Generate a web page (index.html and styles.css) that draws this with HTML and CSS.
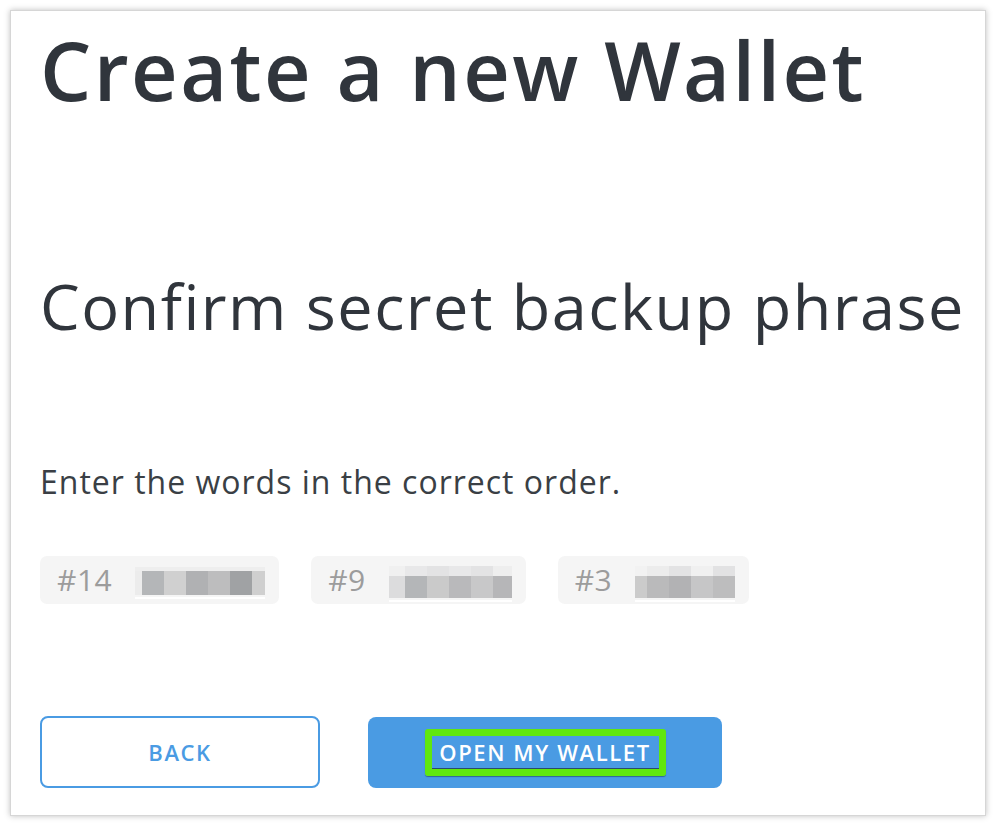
FILE: index.html
```html
<!DOCTYPE html>
<html lang="en">
<head>
<meta charset="utf-8">
<title>Create a new Wallet</title>
<link rel="stylesheet" href="styles.css">
</head>
<body>
<main class="panel">
  <h1 class="title">Create a new Wallet</h1>
  <h2 class="subtitle">Confirm secret backup phrase</h2>
  <p class="hint">Enter the words in the correct order.</p>
  <div class="chips">
    <div class="chip">
      <span class="num">#14</span>
      <span class="blur b1">
        <span class="col w7"><i class="t c-ee"></i><i class="m c-ec"></i></span>
        <span class="col w22"><i class="t c-ee"></i><i class="m c-b4"></i></span>
        <span class="col w22"><i class="t c-ee"></i><i class="m c-d0"></i></span>
        <span class="col w22"><i class="t c-ee"></i><i class="m c-b0"></i></span>
        <span class="col w22"><i class="t c-ee"></i><i class="m c-bd"></i></span>
        <span class="col w22"><i class="t c-ee"></i><i class="m c-a0"></i></span>
        <span class="col w13"><i class="t c-ee"></i><i class="m c-cf"></i></span>
      </span>
    </div>
    <div class="chip">
      <span class="num">#9</span>
      <span class="blur b2">
        <span class="col w16"><i class="t c-f0"></i><i class="m c-dc"></i></span>
        <span class="col w22"><i class="t c-e8"></i><i class="m c-b4"></i></span>
        <span class="col w22"><i class="t c-e3"></i><i class="m c-ca"></i></span>
        <span class="col w22"><i class="t c-e8"></i><i class="m c-b9"></i></span>
        <span class="col w22"><i class="t c-e3"></i><i class="m c-c8"></i></span>
        <span class="col w19"><i class="t c-ee"></i><i class="m c-b6"></i></span>
      </span>
    </div>
    <div class="chip">
      <span class="num">#3</span>
      <span class="blur b3">
        <span class="col w12"><i class="t c-f2"></i><i class="m c-cb"></i></span>
        <span class="col w22"><i class="t c-ec"></i><i class="m c-ba"></i></span>
        <span class="col w22"><i class="t c-e3"></i><i class="m c-b2"></i></span>
        <span class="col w22"><i class="t c-f0"></i><i class="m c-c6"></i></span>
        <span class="col w22"><i class="t c-e2"></i><i class="m c-bd"></i></span>
      </span>
    </div>
  </div>
  <div class="actions">
    <button class="btn btn-outline">BACK</button>
    <button class="btn btn-primary"><span class="focus">OPEN MY WALLET</span></button>
  </div>
</main>
</body>
</html>
```

FILE: styles.css
```css
html, body {
  margin: 0;
  padding: 0;
  background: #ffffff;
}

body {
  font-family: "Open Sans", "Noto Sans", sans-serif;
  color: #30353c;
}

.panel {
  box-sizing: border-box;
  margin: 10px;
  width: 976px;
  height: 806px;
  border: 1px solid #d6d6d6;
  box-shadow: 0 0 6px rgba(0, 0, 0, 0.25);
  background: #ffffff;
  padding: 18px 0 0 29px;
  display: flex;
  flex-direction: column;
  align-items: flex-start;
}

.title {
  margin: 0;
  font-size: 81px;
  line-height: 81px;
  font-weight: 600;
  letter-spacing: 2.4px;
  color: #30353c;
  white-space: nowrap;
}

.subtitle {
  margin: 164px 0 0;
  font-size: 63px;
  line-height: 63px;
  font-weight: 400;
  letter-spacing: 1.5px;
  color: #30353c;
  white-space: nowrap;
}

.hint {
  margin: 129px 0 0;
  font-size: 32px;
  line-height: 32px;
  font-weight: 400;
  letter-spacing: 1px;
  color: #3a3f45;
  white-space: nowrap;
}

.chips {
  margin-top: 58px;
  display: flex;
  gap: 32px;
}

.chip {
  height: 48px;
  box-sizing: border-box;
  background: #f5f5f5;
  border-radius: 7px;
  display: flex;
  align-items: center;
  padding: 0 14px 0 17px;
  gap: 23px;
}

.num {
  font-size: 30px;
  line-height: 30px;
  letter-spacing: 0.5px;
  color: #9c9c9c;
}

.blur {
  display: flex;
  height: 34px;
}

.blur .col {
  display: flex;
  flex-direction: column;
}

.blur .t { display: block; height: 10px; }
.blur .m { display: block; height: 22px; }
.b1 .t { height: 4px; }
.b1 .m { height: 24px; }
.b1 { height: 30px; border-bottom: 2px solid #fff; margin-top: 6px; }
.b2, .b3 { border-bottom: 2px solid #fff; margin-top: 8px; }

.w7 { width: 7px; }
.w12 { width: 12px; }
.w13 { width: 13px; }
.w16 { width: 16px; }
.w19 { width: 19px; }
.w22 { width: 22px; }

.c-a0 { background: #a0a2a4; }
.c-b0 { background: #b0b1b3; }
.c-b2 { background: #b2b2b4; }
.c-b4 { background: #b4b6b8; }
.c-b6 { background: #b6b6b8; }
.c-b9 { background: #b9b9bb; }
.c-ba { background: #bababb; }
.c-bd { background: #bdbdbe; }
.c-c6 { background: #c6c6c7; }
.c-c8 { background: #c8c8c9; }
.c-ca { background: #cacaca; }
.c-cb { background: #cbcbcb; }
.c-cf { background: #cfcfcf; }
.c-d0 { background: #d0d0d0; }
.c-dc { background: #dcdcdd; }
.c-e2 { background: #e2e2e3; }
.c-e3 { background: #e3e3e4; }
.c-e8 { background: #e8e8e9; }
.c-ec { background: #ececec; }
.c-ee { background: #eeeeee; }
.c-f0 { background: #f0f0f0; }
.c-f2 { background: #f2f2f2; }

.actions {
  margin-top: 112px;
  display: flex;
  gap: 48px;
}

.btn {
  box-sizing: border-box;
  height: 72px;
  border-radius: 8px;
  font-family: "Open Sans", "Noto Sans", sans-serif;
  font-size: 22px;
  font-weight: 600;
  letter-spacing: 1.6px;
  display: flex;
  align-items: center;
  justify-content: center;
  padding: 0;
  cursor: pointer;
}

.btn-outline {
  width: 280px;
  background: #ffffff;
  border: 2px solid #4a9be3;
  color: #4a9be3;
}

.btn-primary {
  width: 354px;
  background: #4a9be3;
  border: none;
  color: #ffffff;
  margin-top: 1px;
  height: 71px;
}

.focus {
  display: block;
  box-sizing: border-box;
  width: 241px;
  height: 47px;
  line-height: 33px;
  border: 7px solid #60e70e;
  border-radius: 3px;
  text-align: center;
  box-shadow: inset 0 -1px 0 #2a4a6e, 0 1px 1px rgba(0, 0, 0, 0.35);
}
```
